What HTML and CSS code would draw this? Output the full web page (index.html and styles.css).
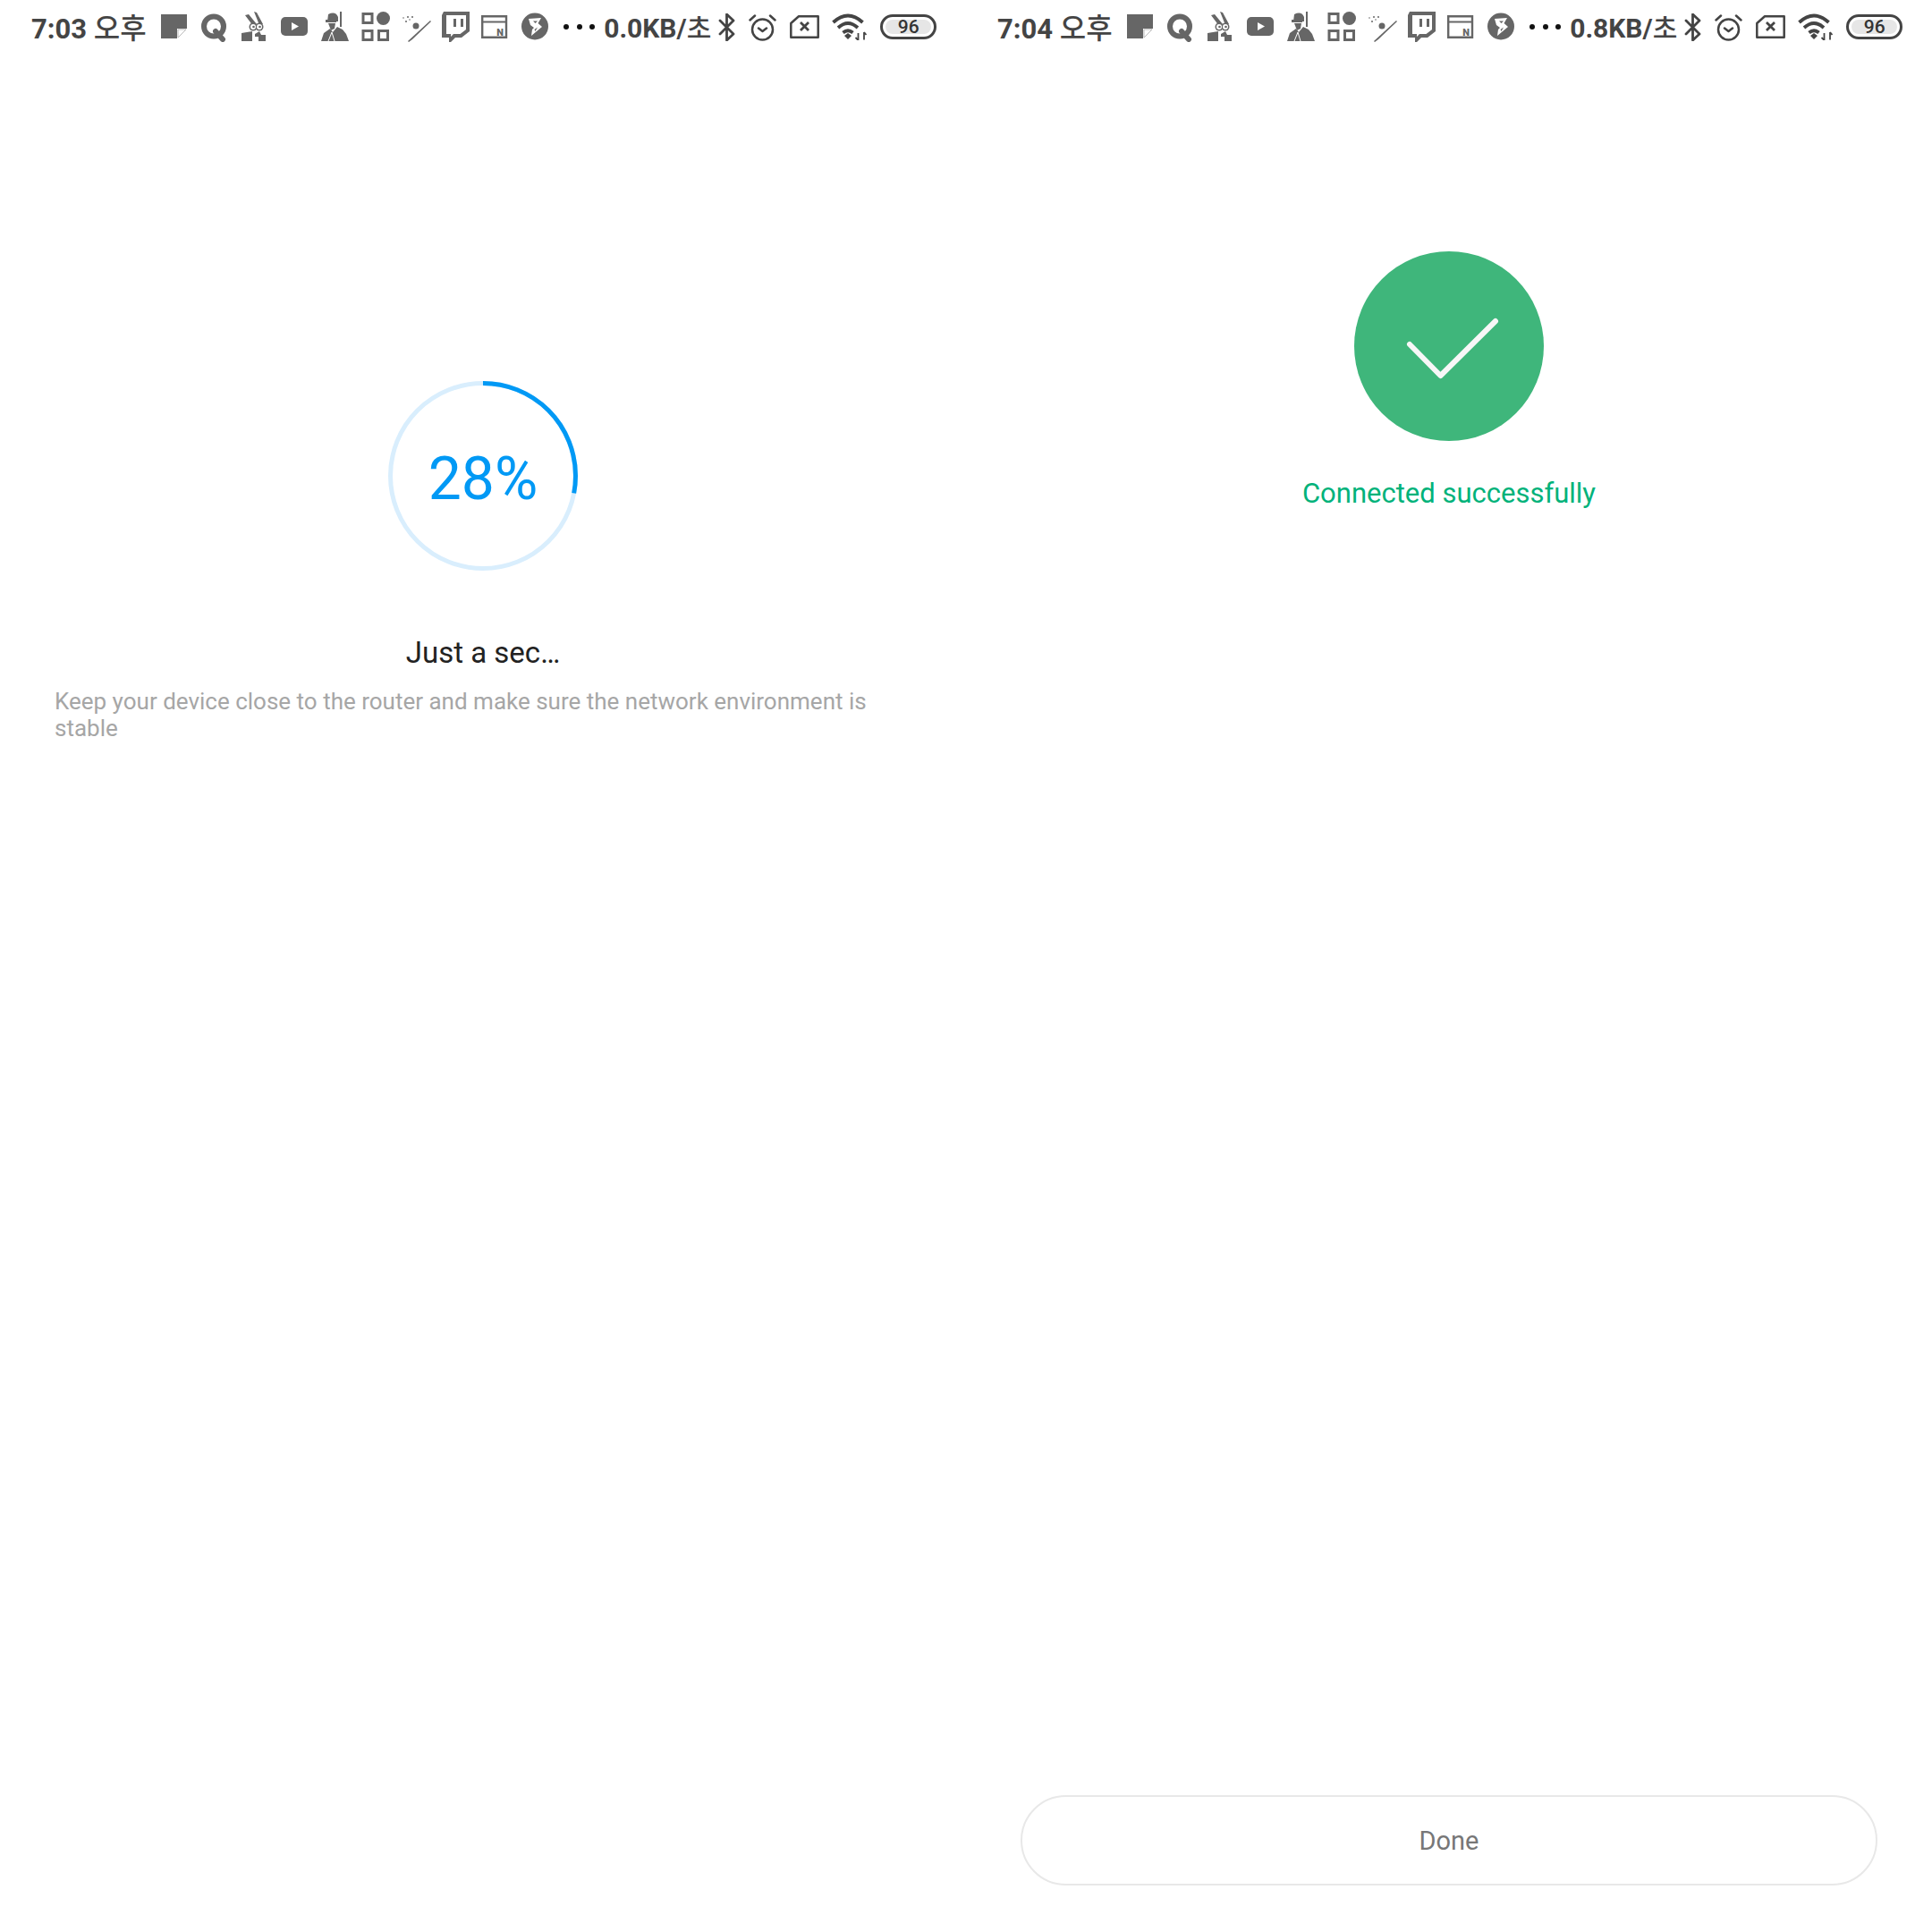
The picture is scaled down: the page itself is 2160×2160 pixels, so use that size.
FILE: index.html
```html
<!DOCTYPE html>
<html lang="en">
<head>
    <meta charset="UTF-8">
    <title>Connecting device</title>
    <link rel="stylesheet" href="styles.css">
</head>
<body>
    <svg class="sprites" width="0" height="0">
        <symbol id="i-note" viewBox="0 0 34 34">
            <path d="M0 3H29V19H18V30H0Z"/>
            <path d="M19 20H28L19 29Z" fill="#fff" stroke="#bbb"/>
        </symbol>
        <symbol id="i-q" viewBox="0 0 34 34">
            <circle cx="14" cy="16.5" r="11" fill="none" stroke="currentColor" stroke-width="6"/>
            <path d="M16 22L24 31" stroke="currentColor" stroke-width="6" stroke-linecap="round"/>
        </symbol>
        <symbol id="i-rabbit" viewBox="0 0 34 34">
            <path d="M4 4L8 3 17 14 13 16ZM14 0L17 1 24 14 20 15Z"/>
            <circle cx="13" cy="17" r="4.500"/>
            <circle cx="20" cy="17" r="4.500"/>
            <circle cx="13" cy="17" r="3" fill="#fff"/>
            <circle cx="20" cy="17" r="3" fill="#fff"/>
            <circle cx="13.500" cy="17" r="1.300"/>
            <circle cx="20.500" cy="17" r="1.300"/>
            <path d="M0 24L12 22V33H0ZM15 25L20 22 22 26H27V33H19V28H15Z"/>
        </symbol>
        <symbol id="i-youtube" viewBox="0 0 34 34">
            <rect x="0" y="6" width="30" height="21" rx="5"/>
            <path d="M12 12L20 16.5 12 21Z" fill="#fff"/>
        </symbol>
        <symbol id="i-pubg" viewBox="0 0 34 34">
            <path d="M8 3Q16 -1 19 6V11H7Z"/>
            <path d="M5 9H17V12H5Z"/>
            <path d="M8 13H16L15 19 11 21Z"/>
            <path d="M21 0H23V17H21Z"/>
            <path d="M10 19L13 23 18 17 24 20 28 25 31 33H0L3 24Z"/>
            <path d="M12 23L15 33M12 23L8 33" fill="none" stroke="#fff" stroke-width="1"/>
        </symbol>
        <symbol id="i-apps" viewBox="0 0 34 34">
            <path d="M2 2.5H12V12.5H2ZM2 21.500H12V31.500H2ZM19.500 21.500H29.500V31.500H19.500Z" fill="none" stroke="currentColor" stroke-width="3"/>
            <circle cx="24.500" cy="7.500" r="7.500"/>
        </symbol>
        <symbol id="i-comet" viewBox="0 0 34 34">
            <circle cx="16" cy="16" r="3.500"/>
            <path d="M7 33L32 10 33 11 12 31 8 34Z"/>
            <circle cx="2" cy="7" r=".8"/>
            <circle cx="7" cy="6" r="1"/>
            <circle cx="12" cy="6" r="1"/>
            <circle cx="5" cy="11" r="1"/>
            <circle cx="9" cy="9" r=".8"/>
        </symbol>
        <symbol id="i-twitch" viewBox="0 0 34 34">
            <path d="M2 0H31V22L22 29H15L10 34H8V29H0V4Z"/>
            <path d="M5 4H27V20L20.500 25H13L10 28V25H5Z" fill="#fff"/>
            <path d="M13 8H16V17H13ZM21 8H24V17H21Z"/>
        </symbol>
        <symbol id="i-card" viewBox="0 0 34 34">
            <path d="M1.200 5.200H28V28.800H1.200Z" fill="none" stroke="currentColor" stroke-width="2.400"/>
            <path d="M1 10.500H28V12.500H1Z"/>
        </symbol>
        <symbol id="i-bee" viewBox="0 0 34 34">
            <circle cx="15" cy="16.500" r="15"/>
            <path d="M8 8L22 7 18.500 13 23 17 11 27 12 20 14 18 10 15Z" fill="#fff"/>
            <path d="M13 10.500L18 10.500 15.500 13ZM14.500 20L18 17.500 15.500 22Z"/>
        </symbol>
        <symbol id="i-bt" viewBox="0 0 19 31">
            <path d="M2 8L17 23 9.500 30V1L17 8 2 23" fill="none" stroke="currentColor" stroke-width="2.800" stroke-linejoin="round" stroke-linecap="round"/>
        </symbol>
        <symbol id="i-alarm" viewBox="0 0 31 31">
            <circle cx="15.500" cy="18" r="11.500" fill="none" stroke="currentColor" stroke-width="2.500"/>
            <path d="M1.500 7.500L7 2.500M24 2.500L29.500 7.500M11 16.500L15.500 20 20 16.500" fill="none" stroke="currentColor" stroke-width="2.500" stroke-linecap="round" stroke-linejoin="round"/>
        </symbol>
        <symbol id="i-sim" viewBox="0 0 33 26">
            <path d="M10 1.300H31.700V24.700H1.300V9Z" fill="none" stroke="currentColor" stroke-width="2.500" stroke-linejoin="round"/>
            <path d="M12 8L21 17M21 8L12 17" fill="none" stroke="currentColor" stroke-width="2.800"/>
        </symbol>
        <symbol id="i-wifi" viewBox="0 0 39 30">
            <path d="M1.500 10Q18 -5 34.500 10M7 16Q18 6 29 16M12.500 21.500Q18 17 23.500 21.500" fill="none" stroke="currentColor" stroke-width="3.800"/>
            <path d="M14 25L18 22 22 25 18 29Z"/>
            <path d="M29.500 22V30M26.500 27L29.500 30M36 21V29.500M36 21L38.500 24" fill="none" stroke="currentColor" stroke-width="1.800"/>
        </symbol>
    </svg>

    <div class="screen">
        <div class="status-bar">
            <span class="clock">7:03 <span class="ko">오후</span></span>
            <div class="app-icons">
                <svg class="slot"><use href="#i-note"/></svg>
                <svg class="slot"><use href="#i-q"/></svg>
                <svg class="slot"><use href="#i-rabbit"/></svg>
                <svg class="slot"><use href="#i-youtube"/></svg>
                <svg class="slot"><use href="#i-pubg"/></svg>
                <svg class="slot"><use href="#i-apps"/></svg>
                <svg class="slot"><use href="#i-comet"/></svg>
                <svg class="slot"><use href="#i-twitch"/></svg>
                <svg class="slot" viewBox="0 0 34 34"><use href="#i-card"/><text x="21" y="27" text-anchor="middle" class="card-n">N</text></svg>
                <svg class="slot"><use href="#i-bee"/></svg>
            </div>
            <div class="more"><i></i><i></i><i></i></div>
            <span class="speed">0.0KB/<span class="ko">초</span></span>
            <div class="sys-icons">
                <svg class="bt"><use href="#i-bt"/></svg>
                <svg class="alarm"><use href="#i-alarm"/></svg>
                <svg class="sim"><use href="#i-sim"/></svg>
                <svg class="wifi"><use href="#i-wifi"/></svg>
                <div class="battery"><span>96</span></div>
            </div>
        </div>
        <div class="progress">
            <div class="ring-wrap">
                <svg class="ring" viewBox="0 0 212 212">
                    <circle class="ring-track" cx="106" cy="106" r="103.500"/>
                    <circle class="ring-value" cx="106" cy="106" r="103.500" pathLength="100"/>
                </svg>
                <div class="percent">28%</div>
            </div>
            <div class="wait-title">Just a sec…</div>
            <p class="wait-hint">Keep your device close to the router and make sure the network environment is stable</p>
        </div>
    </div>

    <div class="screen">
        <div class="status-bar">
            <span class="clock">7:04 <span class="ko">오후</span></span>
            <div class="app-icons">
                <svg class="slot"><use href="#i-note"/></svg>
                <svg class="slot"><use href="#i-q"/></svg>
                <svg class="slot"><use href="#i-rabbit"/></svg>
                <svg class="slot"><use href="#i-youtube"/></svg>
                <svg class="slot"><use href="#i-pubg"/></svg>
                <svg class="slot"><use href="#i-apps"/></svg>
                <svg class="slot"><use href="#i-comet"/></svg>
                <svg class="slot"><use href="#i-twitch"/></svg>
                <svg class="slot" viewBox="0 0 34 34"><use href="#i-card"/><text x="21" y="27" text-anchor="middle" class="card-n">N</text></svg>
                <svg class="slot"><use href="#i-bee"/></svg>
            </div>
            <div class="more"><i></i><i></i><i></i></div>
            <span class="speed">0.8KB/<span class="ko">초</span></span>
            <div class="sys-icons">
                <svg class="bt"><use href="#i-bt"/></svg>
                <svg class="alarm"><use href="#i-alarm"/></svg>
                <svg class="sim"><use href="#i-sim"/></svg>
                <svg class="wifi"><use href="#i-wifi"/></svg>
                <div class="battery"><span>96</span></div>
            </div>
        </div>
        <div class="success">
            <svg class="check" viewBox="0 0 212 212">
                <circle cx="106" cy="106" r="106" fill="#3fb67b"/>
                <path d="M62 104L96.500 139 158 78" fill="none" stroke="#f7f7f7" stroke-width="6" stroke-linecap="round" stroke-linejoin="round"/>
            </svg>
            <div class="success-text">Connected successfully</div>
        </div>
        <button class="done">Done</button>
    </div>
</body>
</html>
```

FILE: styles.css
```css
body {
    margin: 0;
    display: flex;
    width: 2160px;
    height: 2160px;
    background-color: #fff;
    font-family: Roboto, "Noto Sans CJK KR", sans-serif;
}
.sprites {
    display: block;
    width: 0;
    height: 0;
    overflow: hidden;
}
.screen {
    display: flex;
    flex-direction: column;
    width: 1080px;
    height: 2160px;
}

/* status bar */
.status-bar {
    display: flex;
    align-items: center;
    height: 60px;
    padding-left: 35px;
    color: #444;
}
.clock {
    width: 145px;
    flex: none;
    margin-top: -2px;
    font-size: 31px;
    font-weight: 700;
    white-space: nowrap;
}
.clock .ko {
    font-size: 32px;
}
.speed {
    width: 128px;
    flex: none;
    margin-top: -2px;
    font-size: 30px;
    font-weight: 700;
    white-space: nowrap;
}
.ko {
    font-family: "Noto Sans CJK KR", sans-serif;
    font-weight: 500;
}
.app-icons {
    display: flex;
    color: #666;
    fill: #666;
    gap: 10.800px;
}
.slot {
    width: 34px;
    height: 34px;
    flex: none;
}
.card-n {
    font-family: Roboto, sans-serif;
    font-size: 11px;
    font-weight: 900;
}
.more {
    display: flex;
    gap: 8.500px;
    margin-left: 13px;
    width: 45px;
    flex: none;
}
.more i {
    width: 6px;
    height: 6px;
    border-radius: 50%;
    background-color: #111;
}
.sys-icons {
    display: flex;
    align-items: center;
    gap: 15px;
    fill: #444;
}
.bt { width: 19px; height: 31px; }
.alarm { width: 31px; height: 31px; }
.sim { width: 33px; height: 26px; }
.wifi { width: 39px; height: 30px; margin-left: -1px; }
.battery {
    box-sizing: border-box;
    width: 63px;
    height: 28px;
    padding: 3px;
    border: 3px solid #444;
    border-radius: 14px;
    background-clip: padding-box;
}
.battery span {
    display: block;
    height: 16px;
    border-radius: 8px;
    background-color: #e6e6e6;
    font-size: 21px;
    font-weight: 500;
    line-height: 16px;
    text-align: center;
    color: #333;
}

/* left: progress */
.progress {
    display: flex;
    flex-direction: column;
    align-items: center;
    padding-top: 366px;
}
.ring-wrap {
    display: grid;
    place-items: center;
    width: 212px;
    height: 212px;
}
.ring, .percent {
    grid-area: 1 / 1;
}
.ring {
    width: 212px;
    height: 212px;
}
.ring-track, .ring-value {
    fill: none;
    stroke-width: 5;
}
.ring-track {
    stroke: #d9eefd;
}
.ring-value {
    stroke: #0099f5;
    stroke-dasharray: 28 100;
    transform: rotate(-90deg);
    transform-origin: center;
}
.percent {
    padding-top: 6px;
    font-size: 66px;
    font-weight: 400;
    color: #0099f5;
}
.wait-title {
    margin-top: 72px;
    font-size: 33px;
    line-height: 40px;
    color: #222;
}
.wait-hint {
    box-sizing: border-box;
    width: 100%;
    margin: 19px 0 0;
    padding: 0 61px;
    font-size: 26px;
    line-height: 30px;
    color: #a6a6a6;
}

/* right: success */
.success {
    display: flex;
    flex-direction: column;
    align-items: center;
    padding-top: 221px;
}
.check {
    width: 212px;
    height: 212px;
}
.success-text {
    margin-top: 39px;
    font-size: 31px;
    line-height: 40px;
    color: #00b27a;
}
.done {
    box-sizing: border-box;
    align-self: center;
    width: 958px;
    height: 101px;
    margin-top: auto;
    margin-bottom: 52px;
    border: 2px solid #e8e8e8;
    border-radius: 51px;
    background-color: #fff;
    font-family: inherit;
    font-size: 29px;
    color: #777;
}
```
